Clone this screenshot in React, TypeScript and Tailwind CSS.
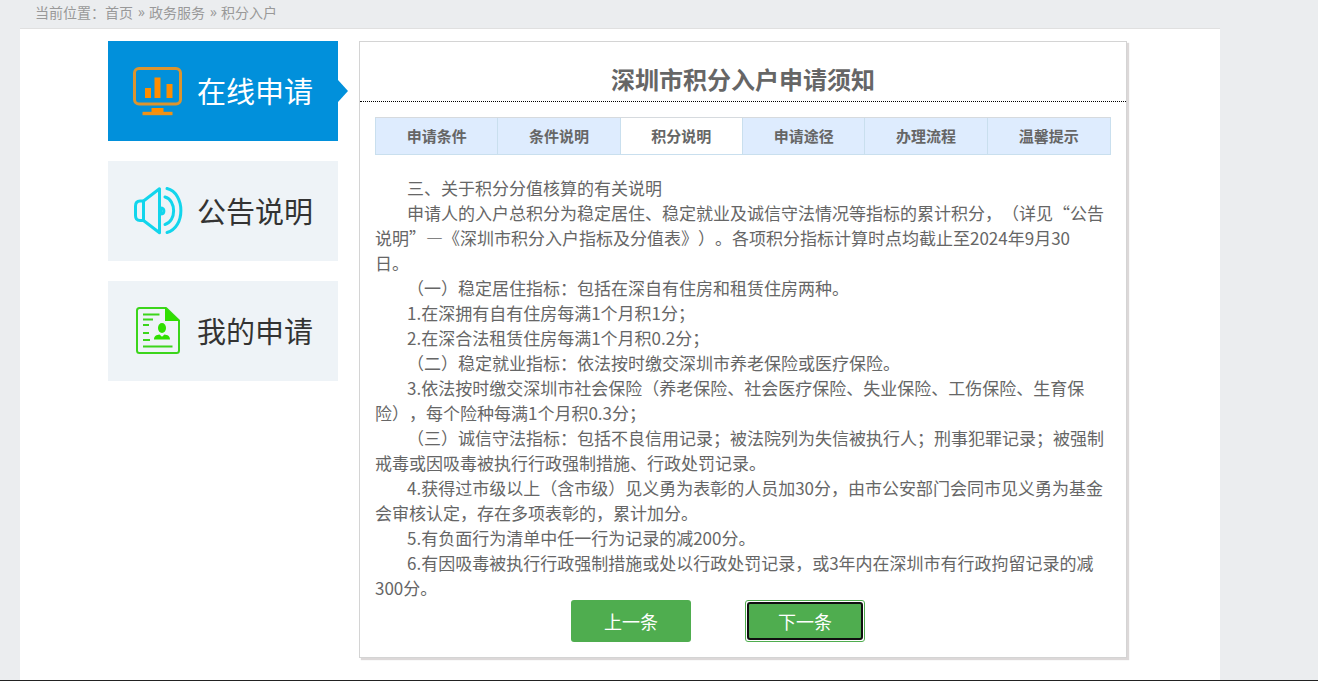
import { useState } from 'react';
import type { ReactNode } from 'react';

const crumbs = ['首页', '政务服务', '积分入户'];

const tabs = ['申请条件', '条件说明', '积分说明', '申请途径', '办理流程', '温馨提示'];

const paragraphs = [
  '三、关于积分分值核算的有关说明',
  '申请人的入户总积分为稳定居住、稳定就业及诚信守法情况等指标的累计积分，（详见“公告说明”—《深圳市积分入户指标及分值表》）。各项积分指标计算时点均截止至2024年9月30日。',
  '（一）稳定居住指标：包括在深自有住房和租赁住房两种。',
  '1.在深拥有自有住房每满1个月积1分；',
  '2.在深合法租赁住房每满1个月积0.2分；',
  '（二）稳定就业指标：依法按时缴交深圳市养老保险或医疗保险。',
  '3.依法按时缴交深圳市社会保险（养老保险、社会医疗保险、失业保险、工伤保险、生育保险），每个险种每满1个月积0.3分；',
  '（三）诚信守法指标：包括不良信用记录；被法院列为失信被执行人；刑事犯罪记录；被强制戒毒或因吸毒被执行行政强制措施、行政处罚记录。',
  '4.获得过市级以上（含市级）见义勇为表彰的人员加30分，由市公安部门会同市见义勇为基金会审核认定，存在多项表彰的，累计加分。',
  '5.有负面行为清单中任一行为记录的减200分。',
  '6.有因吸毒被执行行政强制措施或处以行政处罚记录，或3年内在深圳市有行政拘留记录的减300分。',
];

function ChartIcon() {
  return (
    <svg width="60" height="60" viewBox="0 0 60 60" fill="none" aria-hidden="true">
      <rect x="6.5" y="8.500" width="46" height="35.500" rx="4.5" stroke="#dc942e" strokeWidth="3" />
      <path d="M17 28h6v10h-6zM26.500 17.500h6V38h-6zM38.500 24h6v14h-6z" fill="#ff8d00" />
      <path d="M23.500 48h12v4h-12z" fill="#ff8d00" />
      <path d="M14.500 51.800h30v3.400h-30z" fill="#f09216" />
    </svg>
  );
}

function SpeakerIcon() {
  return (
    <svg
      width="60"
      height="60"
      viewBox="0 0 60 60"
      fill="none"
      stroke="#12d5ec"
      strokeWidth="3"
      strokeLinecap="round"
      strokeLinejoin="round"
      aria-hidden="true"
    >
      <path d="M15.500 21H12c-3 0-4.500 2-4.500 5v9.500c0 3 1.500 5 4.500 5h3.500z" />
      <path d="M15.500 21 31.500 8.800v43.900L15.500 40.500" />
      <path d="M32.500 28c4.500 0 4.500 6 0 6z" />
      <path d="M37 17c11.500 3 11.500 24.500 0 27.500" />
      <path d="M39 8.500c18.500 4.500 18.500 39.500 0 44" />
    </svg>
  );
}

function DocumentIcon() {
  return (
    <svg width="60" height="60" viewBox="0 0 60 60" fill="none" stroke="#3bd51b" aria-hidden="true">
      <path d="M38 8H11.500Q9 8 9 10.500v40Q9 53 11.500 53h37q2.500 0 2.500-2.500V20.500z" strokeWidth="2" strokeLinejoin="round" />
      <path d="M37 7.500v13.500h14.500z" fill="#2fdf00" stroke="none" />
      <path d="M15 14.500h16.500M15 19.500h10M15 25h6M15 33h6M15 40h7M15 46.500h29.500" strokeWidth="2" />
      <ellipse cx="34" cy="28" rx="4" ry="4.900" fill="#2fdf00" stroke="none" />
      <path d="M26 39.500c0-3.700 2.500-4.500 5.500-5l2.500 2.300 2.500-2.300c3 .5 5.500 1.300 5.500 5z" fill="#2fdf00" stroke="none" />
    </svg>
  );
}

const menu: { label: string; icon: ReactNode }[] = [
  { label: '在线申请', icon: <ChartIcon /> },
  { label: '公告说明', icon: <SpeakerIcon /> },
  { label: '我的申请', icon: <DocumentIcon /> },
];

function Breadcrumb() {
  return (
    <nav aria-label="当前位置" className="flex h-7 items-center gap-[5px] pb-1 pl-[35px] text-sm text-[#999999]">
      <span>
        当前位置：<a href="#首页">{crumbs[0]}</a>
      </span>
      {crumbs.slice(1).map((crumb) => (
        <span key={crumb} className="flex gap-1">
          <span className="font-['Open_Sans',sans-serif]">»</span>
          <a href={`#${crumb}`}>{crumb}</a>
        </span>
      ))}
    </nav>
  );
}

function SideMenu() {
  return (
    <nav aria-label="积分入户" className="flex w-[230px] shrink-0 flex-col gap-5">
      {menu.map(({ label, icon }, i) => (
        <a
          key={label}
          href={`#${label}`}
          aria-current={i === 0 ? 'page' : undefined}
          className={`relative flex h-[100px] items-center gap-[9px] pl-5 text-[29px] ${
            i === 0 ? 'bg-[#0190db] text-white' : 'bg-[#eef3f7] text-[#333333]'
          }`}
        >
          <span className="pb-0.5">{icon}</span>
          <span>{label}</span>
          {i === 0 && (
            <svg className="absolute top-[39px] left-full" width="10" height="22" viewBox="0 0 10 22" aria-hidden="true">
              <path d="M0 0 10 11 0 22z" fill="#0190db" />
            </svg>
          )}
        </a>
      ))}
    </nav>
  );
}

export default function App() {
  const [active, setActive] = useState(2);
  const step = (by: number) => setActive((n) => Math.min(tabs.length - 1, Math.max(0, n + by)));

  return (
    <div
      lang="zh-CN"
      className="flex min-h-screen flex-col border-b border-[#222222] bg-[#ebedef] font-['Noto_Sans_CJK_SC',sans-serif] [text-spacing-trim:space-all]"
    >
      <Breadcrumb />
      <main className="ml-5 flex w-full max-w-[1200px] grow items-start gap-[21px] border-t border-[#e0e0e0] bg-white pt-3 pr-[93px] pb-[22px] pl-[88px]">
        <SideMenu />
        <section className="min-w-0 grow border border-[#d4d4d4] text-[#666666] shadow-[2px_2px_1px_#dcd8d8]">
          <h1 className="border-b border-dotted border-black pt-[19px] pb-1 text-center text-2xl leading-9 font-bold">
            深圳市积分入户申请须知
          </h1>
          <div className="p-[15px]">
            <div role="tablist" className="grid h-[38px] grid-cols-6 border border-[#c9dfee] border-t-[#d6dade]">
              {tabs.map((tab, i) => (
                <button
                  key={tab}
                  type="button"
                  role="tab"
                  aria-selected={i === active}
                  onClick={() => setActive(i)}
                  className={`border-[#c9dfee] text-[15px] font-bold not-last:border-r ${
                    i === active ? 'bg-white' : 'bg-[#deecfe]'
                  }`}
                >
                  {tab}
                </button>
              ))}
            </div>
            <div className="pt-5 pr-[7px] text-[17px] leading-[25px]">
              {paragraphs.map((text) => (
                <p key={text} className="indent-8">
                  {text}
                </p>
              ))}
            </div>
            <div className="flex justify-center gap-[54px] pr-[50px] text-lg text-white">
              <button type="button" onClick={() => step(-1)} className="h-[42px] w-[120px] rounded-[3px] bg-[#4fad4f]">
                上一条
              </button>
              <button
                type="button"
                onClick={() => step(1)}
                className="h-[42px] w-[120px] rounded-[3px] border border-[#4fad4f] bg-white p-px"
              >
                <span className="flex h-full items-center justify-center rounded-[3px] border-2 border-[#101010] bg-[#4fad4f]">
                  下一条
                </span>
              </button>
            </div>
          </div>
        </section>
      </main>
    </div>
  );
}
